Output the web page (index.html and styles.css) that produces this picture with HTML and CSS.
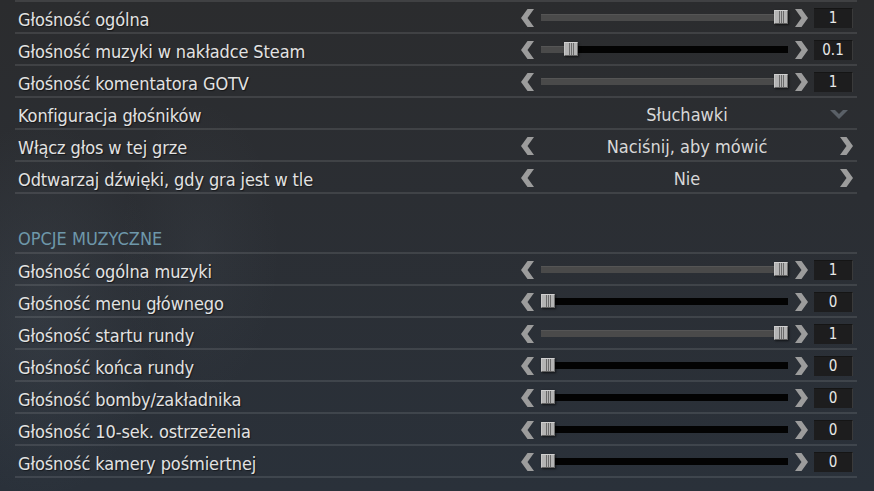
FILE: index.html
```html
<!DOCTYPE html>
<html lang="pl">
<head>
  <meta charset="UTF-8" />
  <title>Ustawienia dźwięku</title>
  <link rel="stylesheet" href="styles.css">
</head>
<body>

  <!-- Audio settings -->
  <main class="settings">
    <div class="row">
      <span class="label">Głośność ogólna</span>
      <div class="slider">
        <svg class="arrow" viewBox="0 0 13 18"><polygon points="13,0 6.5,0 0,9 6.5,18 13,18 6.5,9"/></svg>
        <div class="track"><div class="fill" style="width:240px"></div><div class="handle" style="left:233px"></div></div>
        <svg class="arrow" viewBox="0 0 13 18"><polygon points="0,0 6.5,0 13,9 6.5,18 0,18 6.5,9"/></svg>
        <div class="value">1</div>
      </div>
    </div>
    <div class="row">
      <span class="label">Głośność muzyki w nakładce Steam</span>
      <div class="slider">
        <svg class="arrow" viewBox="0 0 13 18"><polygon points="13,0 6.5,0 0,9 6.5,18 13,18 6.5,9"/></svg>
        <div class="track"><div class="fill" style="width:30px"></div><div class="handle" style="left:23px"></div></div>
        <svg class="arrow" viewBox="0 0 13 18"><polygon points="0,0 6.5,0 13,9 6.5,18 0,18 6.5,9"/></svg>
        <div class="value">0.1</div>
      </div>
    </div>
    <div class="row">
      <span class="label">Głośność komentatora GOTV</span>
      <div class="slider">
        <svg class="arrow" viewBox="0 0 13 18"><polygon points="13,0 6.5,0 0,9 6.5,18 13,18 6.5,9"/></svg>
        <div class="track"><div class="fill" style="width:240px"></div><div class="handle" style="left:233px"></div></div>
        <svg class="arrow" viewBox="0 0 13 18"><polygon points="0,0 6.5,0 13,9 6.5,18 0,18 6.5,9"/></svg>
        <div class="value">1</div>
      </div>
    </div>
    <div class="row">
      <span class="label">Konfiguracja głośników</span>
      <div class="dropdown">
        <span class="choice">Słuchawki</span>
        <svg class="chevron" viewBox="0 0 18 10"><polygon points="0,0 5,0 9,4 13,0 18,0 9,9"/></svg>
      </div>
    </div>
    <div class="row">
      <span class="label">Włącz głos w tej grze</span>
      <div class="selector">
        <svg class="arrow" viewBox="0 0 13 18"><polygon points="13,0 6.5,0 0,9 6.5,18 13,18 6.5,9"/></svg>
        <span class="choice">Naciśnij, aby mówić</span>
        <svg class="arrow" viewBox="0 0 13 18"><polygon points="0,0 6.5,0 13,9 6.5,18 0,18 6.5,9"/></svg>
      </div>
    </div>
    <div class="row">
      <span class="label">Odtwarzaj dźwięki, gdy gra jest w tle</span>
      <div class="selector">
        <svg class="arrow" viewBox="0 0 13 18"><polygon points="13,0 6.5,0 0,9 6.5,18 13,18 6.5,9"/></svg>
        <span class="choice">Nie</span>
        <svg class="arrow" viewBox="0 0 13 18"><polygon points="0,0 6.5,0 13,9 6.5,18 0,18 6.5,9"/></svg>
      </div>
    </div>

    <h2 class="section-title">OPCJE MUZYCZNE</h2>

    <div class="row">
      <span class="label">Głośność ogólna muzyki</span>
      <div class="slider">
        <svg class="arrow" viewBox="0 0 13 18"><polygon points="13,0 6.5,0 0,9 6.5,18 13,18 6.5,9"/></svg>
        <div class="track"><div class="fill" style="width:240px"></div><div class="handle" style="left:233px"></div></div>
        <svg class="arrow" viewBox="0 0 13 18"><polygon points="0,0 6.5,0 13,9 6.5,18 0,18 6.5,9"/></svg>
        <div class="value">1</div>
      </div>
    </div>
    <div class="row">
      <span class="label">Głośność menu głównego</span>
      <div class="slider">
        <svg class="arrow" viewBox="0 0 13 18"><polygon points="13,0 6.5,0 0,9 6.5,18 13,18 6.5,9"/></svg>
        <div class="track"><div class="fill" style="width:7px"></div><div class="handle" style="left:0px"></div></div>
        <svg class="arrow" viewBox="0 0 13 18"><polygon points="0,0 6.5,0 13,9 6.5,18 0,18 6.5,9"/></svg>
        <div class="value">0</div>
      </div>
    </div>
    <div class="row">
      <span class="label">Głośność startu rundy</span>
      <div class="slider">
        <svg class="arrow" viewBox="0 0 13 18"><polygon points="13,0 6.5,0 0,9 6.5,18 13,18 6.5,9"/></svg>
        <div class="track"><div class="fill" style="width:240px"></div><div class="handle" style="left:233px"></div></div>
        <svg class="arrow" viewBox="0 0 13 18"><polygon points="0,0 6.5,0 13,9 6.5,18 0,18 6.5,9"/></svg>
        <div class="value">1</div>
      </div>
    </div>
    <div class="row">
      <span class="label">Głośność końca rundy</span>
      <div class="slider">
        <svg class="arrow" viewBox="0 0 13 18"><polygon points="13,0 6.5,0 0,9 6.5,18 13,18 6.5,9"/></svg>
        <div class="track"><div class="fill" style="width:7px"></div><div class="handle" style="left:0px"></div></div>
        <svg class="arrow" viewBox="0 0 13 18"><polygon points="0,0 6.5,0 13,9 6.5,18 0,18 6.5,9"/></svg>
        <div class="value">0</div>
      </div>
    </div>
    <div class="row">
      <span class="label">Głośność bomby/zakładnika</span>
      <div class="slider">
        <svg class="arrow" viewBox="0 0 13 18"><polygon points="13,0 6.5,0 0,9 6.5,18 13,18 6.5,9"/></svg>
        <div class="track"><div class="fill" style="width:7px"></div><div class="handle" style="left:0px"></div></div>
        <svg class="arrow" viewBox="0 0 13 18"><polygon points="0,0 6.5,0 13,9 6.5,18 0,18 6.5,9"/></svg>
        <div class="value">0</div>
      </div>
    </div>
    <div class="row">
      <span class="label">Głośność 10-sek. ostrzeżenia</span>
      <div class="slider">
        <svg class="arrow" viewBox="0 0 13 18"><polygon points="13,0 6.5,0 0,9 6.5,18 13,18 6.5,9"/></svg>
        <div class="track"><div class="fill" style="width:7px"></div><div class="handle" style="left:0px"></div></div>
        <svg class="arrow" viewBox="0 0 13 18"><polygon points="0,0 6.5,0 13,9 6.5,18 0,18 6.5,9"/></svg>
        <div class="value">0</div>
      </div>
    </div>
    <div class="row">
      <span class="label">Głośność kamery pośmiertnej</span>
      <div class="slider">
        <svg class="arrow" viewBox="0 0 13 18"><polygon points="13,0 6.5,0 0,9 6.5,18 13,18 6.5,9"/></svg>
        <div class="track"><div class="fill" style="width:7px"></div><div class="handle" style="left:0px"></div></div>
        <svg class="arrow" viewBox="0 0 13 18"><polygon points="0,0 6.5,0 13,9 6.5,18 0,18 6.5,9"/></svg>
        <div class="value">0</div>
      </div>
    </div>
  </main>

</body>
</html>
```

FILE: styles.css
```css
/* Reset & Base */
* { margin: 0; padding: 0; box-sizing: border-box; }
html, body { height: 100%; }
body {
  font-family: 'DejaVu Sans Condensed', 'DejaVu Sans', sans-serif;
  color: #e2e2e2;
  overflow: hidden;
  background:
    radial-gradient(ellipse 120px 190px at 40px 310px, rgba(125,140,155,0.11), rgba(0,0,0,0)),
    radial-gradient(ellipse 80px 150px at 200px 250px, rgba(125,140,155,0.06), rgba(0,0,0,0)),
    linear-gradient(to bottom, #2b2c2e 0%, #2b2e33 40%, #2a313a 100%);
}

/* Settings list */
.settings {
  width: 842px;
  margin-left: 15px;
  border-top: 2px solid rgba(255,255,255,0.1);
}
.row {
  display: flex;
  align-items: center;
  height: 32px;
  border-bottom: 2px solid rgba(255,255,255,0.1);
  padding-right: 4px;
}
.label {
  width: 506px;
  flex: none;
  padding-left: 3px;
  padding-top: 4px;
  font-size: 18px;
  letter-spacing: -0.1px;
  text-shadow: 1px 1px 1px rgba(0,0,0,0.5);
}

.section-title {
  height: 60px;
  display: flex;
  align-items: flex-end;
  padding: 0 0 3px 3px;
  font-size: 18px;
  font-weight: normal;
  color: #6e98aa;
  border-bottom: 2px solid rgba(255,255,255,0.1);
}

/* Arrows */
.arrow { width: 13px; height: 18px; display: block; flex: none; margin-top: 2px; }
.arrow polygon { fill: #9c9c9c; }

/* Slider */
.slider {
  display: flex;
  align-items: center;
  width: 332px;
}
.slider .track {
  position: relative;
  width: 247px; height: 7px;
  flex: none;
  margin: 1px 7px 0 7px;
  background: #030303;
}
.track .fill {
  height: 100%;
  background: #4a4a4a;
  border-top: 1px solid #555;
}
.track .handle {
  position: absolute;
  top: -4px;
  width: 14px; height: 14px;
  background:
    linear-gradient(to right, transparent 4px, #6a6a6a 4px, #6a6a6a 5px, transparent 5px,
      transparent 6px, #6a6a6a 6px, #6a6a6a 7px, transparent 7px,
      transparent 8px, #6a6a6a 8px, #6a6a6a 9px, transparent 9px),
    #b4b4b4;
  border-top: 1px solid #d0d0d0;
  border-left: 1px solid #c8c8c8;
  border-right: 1px solid #707070;
  border-bottom: 1px solid #606060;
  box-shadow: 1px 1px 2px rgba(0,0,0,0.6);
}
.slider .value {
  width: 39px; height: 20px;
  flex: none;
  margin-left: 6px;
  margin-top: 1px;
  background: #1d1d1e;
  border-top: 1px solid #151515;
  border-right: 1px solid #3a3a3a;
  font-size: 15px;
  line-height: 19px;
  text-align: center;
  color: #e8e8e8;
}

/* Selector and dropdown */
.selector, .dropdown {
  position: relative;
  display: flex;
  align-items: center;
  width: 332px;
}
.choice {
  flex: 1;
  text-align: center;
  font-size: 18px;
  padding-top: 2px;
  color: #d8d8d8;
}
.chevron { position: absolute; left: 309px; top: 8px; width: 18px; height: 10px; }
.chevron polygon { fill: #5a6067; }
```
